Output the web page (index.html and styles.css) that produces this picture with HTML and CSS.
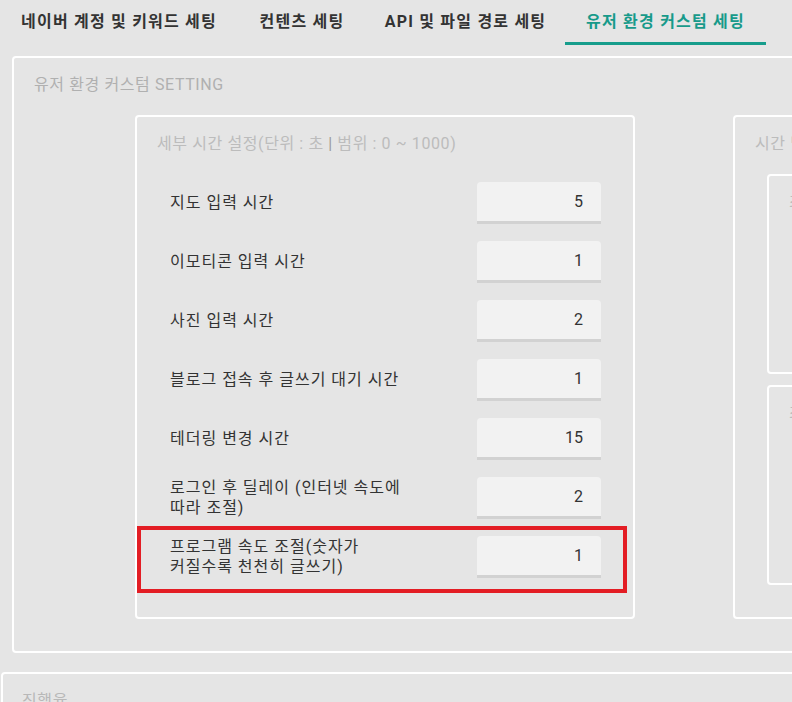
FILE: index.html
```html
<!DOCTYPE html>
<html lang="ko">
<head>
<meta charset="utf-8">
<title>유저 환경 커스텀 세팅</title>
<link rel="stylesheet" href="styles.css">
</head>
<body>
<nav class="tabs">
  <div class="tab tab-1">네이버 계정 및 키워드 세팅</div>
  <div class="tab tab-2">컨텐츠 세팅</div>
  <div class="tab tab-3">API 및 파일 경로 세팅</div>
  <div class="tab tab-4 active">유저 환경 커스텀 세팅</div>
</nav>

<section class="panel panel-main">
  <h2 class="panel-title">유저 환경 커스텀 SETTING</h2>
  <div class="cards">
    <div class="card card-main">
      <h3 class="card-title">세부 시간 설정(단위 : 초 <span class="bar">|</span> 범위 : 0 ~ 1000)</h3>
      <div class="rows">
        <div class="row"><span class="label">지도 입력 시간</span><div class="field">5</div></div>
        <div class="row"><span class="label">이모티콘 입력 시간</span><div class="field">1</div></div>
        <div class="row"><span class="label">사진 입력 시간</span><div class="field">2</div></div>
        <div class="row"><span class="label">블로그 접속 후 글쓰기 대기 시간</span><div class="field">1</div></div>
        <div class="row"><span class="label">테더링 변경 시간</span><div class="field">15</div></div>
        <div class="row"><span class="label">로그인 후 딜레이 (인터넷 속도에<br>따라 조절)</span><div class="field">2</div></div>
        <div class="row"><span class="label">프로그램 속도 조절(숫자가<br>커질수록 천천히 글쓰기)</span><div class="field">1</div></div>
      </div>
      <div class="highlight"></div>
    </div>
    <div class="card card-side">
      <h3 class="card-title">시간 범위 설정</h3>
      <div class="sub">
        <div class="sub-title">최소 대기 시간</div>
      </div>
      <div class="sub">
        <div class="sub-title">최대 대기 시간</div>
      </div>
    </div>
  </div>
</section>

<section class="panel panel-progress">
  <h2 class="panel-title progress-title">진행율</h2>
</section>
</body>
</html>
```

FILE: styles.css
```css
html, body {
  margin: 0;
  padding: 0;
  overflow: hidden;
  width: 792px;
  height: 702px;
}

body {
  background: #e5e5e5;
  font-family: Roboto, "Noto Sans CJK KR", sans-serif;
  font-size: 16px;
  line-height: 22px;
  color: #333;
}

h2, h3 {
  margin: 0;
  font-weight: normal;
  font-size: 16px;
  line-height: 22px;
}

/* Tabs */
.tabs {
  display: flex;
  height: 45px;
}

.tab {
  flex-shrink: 0;
  box-sizing: border-box;
  height: 45px;
  padding-top: 11px;
  text-align: center;
  font-weight: bold;
  letter-spacing: 1.2px;
  color: #333;
  white-space: nowrap;
  border-bottom: 3px solid transparent;
}

.tab-1 { width: 238px; }
.tab-2 { width: 128px; }
.tab-3 { width: 199px; }
.tab-4 { width: 201px; }

.tab.active {
  color: #179a8a;
  border-bottom-color: #179d8c;
}

/* Panels */
.panel {
  box-sizing: border-box;
  border: 2px solid #fff;
  border-radius: 4px;
  width: 1100px;
}

.panel-main {
  margin: 11px 0 0 12px;
  padding: 16px 0 32px 0;
}

.panel-title {
  color: #b0b0b0;
  padding-left: 20px;
  letter-spacing: 0.6px;
}

.cards {
  display: flex;
  gap: 98px;
  margin-top: 19px;
  padding-left: 121px;
}

.card {
  position: relative;
  flex-shrink: 0;
  box-sizing: border-box;
  height: 504px;
  border: 2px solid #fff;
  border-radius: 4px;
  padding: 16px 32px 0 20px;
}

.card-main {
  width: 500px;
}

.card-side {
  width: 400px;
  padding-right: 0;
}

.card-title {
  color: #bcbcbc;
  white-space: nowrap;
  letter-spacing: 0.6px;
}

.card-title .bar {
  color: #9a9a9a;
}

.rows {
  display: flex;
  flex-direction: column;
  gap: 17px;
  margin-top: 27px;
  padding-left: 13px;
}

.row {
  display: flex;
  align-items: center;
  justify-content: space-between;
  height: 42px;
}

.label {
  color: #333;
  line-height: 20px;
  letter-spacing: 1px;
  white-space: nowrap;
}

.field {
  flex-shrink: 0;
  box-sizing: border-box;
  width: 124px;
  height: 42px;
  background: #f2f2f2;
  border-bottom: 3px solid #d2d2d2;
  border-radius: 4px 4px 0 0;
  padding: 9px 18px 0 0;
  text-align: right;
  color: #333;
}

.highlight {
  position: absolute;
  left: 0;
  top: 409px;
  width: 490px;
  height: 67px;
  box-sizing: border-box;
  border: 4px solid #e31d24;
}

.sub {
  box-sizing: border-box;
  width: 300px;
  height: 200px;
  margin: 19px 0 0 12px;
  border: 2px solid #fff;
  border-radius: 4px;
  padding: 16px 0 0 20px;
}

.sub + .sub {
  margin-top: 11px;
}

.sub-title {
  color: #bcbcbc;
  white-space: nowrap;
}

/* Progress panel */
.panel-progress {
  margin: 19px 0 0 1px;
  height: 200px;
  padding-top: 16px;
}

.progress-title {
  padding-left: 19px;
  color: #b8b8b8;
}
```
